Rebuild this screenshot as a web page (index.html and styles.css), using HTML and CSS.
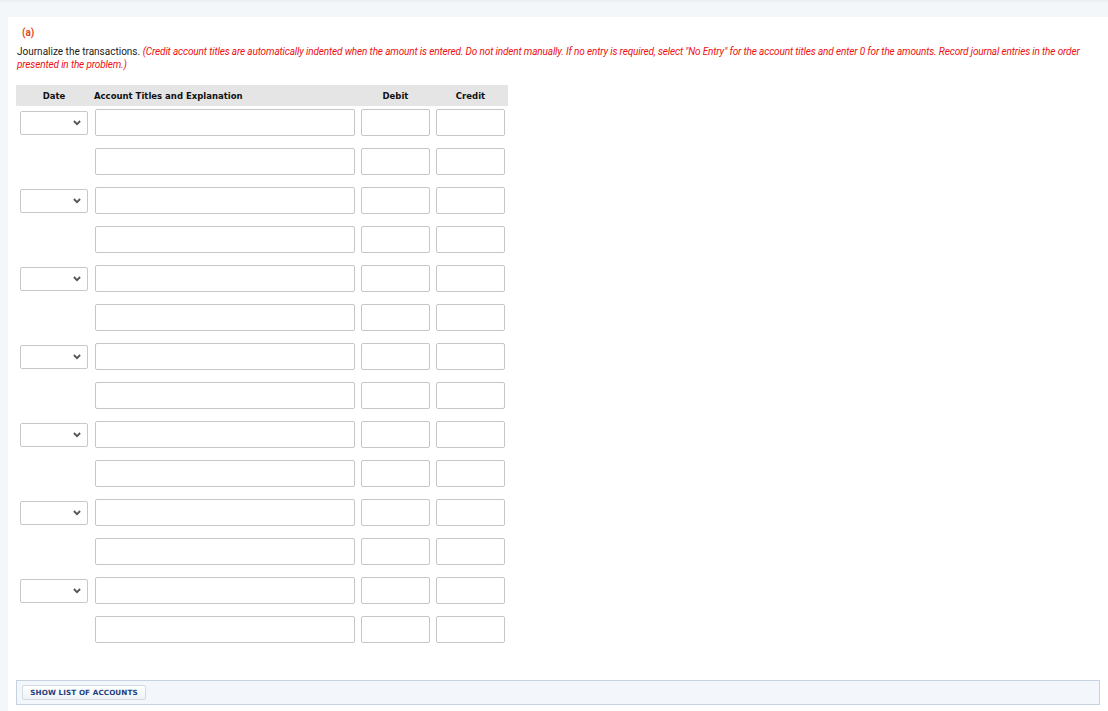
FILE: index.html
```html
<!DOCTYPE html>
<html>
<head>
<meta charset="utf-8">
<link rel="stylesheet" href="styles.css">
</head>
<body>
<div class="panel">
  <div class="part">(a)</div>
  <p class="instr">Journalize the transactions. <em class="note">(Credit account titles are automatically indented when the amount is entered. Do not indent manually. If no entry is required, select "No Entry" for the account titles and enter 0 for the amounts. Record journal entries in the order presented in the problem.)</em></p>
  <div class="journal">
    <div class="head">
      <div class="hc center">Date</div>
      <div class="hc">Account Titles and Explanation</div>
      <div class="hc center">Debit</div>
      <div class="hc center">Credit</div>
    </div>
    <div class="rows" id="rows"></div>
  </div>
  <div class="footer">
    <button class="btn">SHOW LIST OF ACCOUNTS</button>
  </div>
</div>
<template id="tpl-first">
  <div class="row">
    <div class="sel"><svg width="8" height="6" viewBox="0 0 8 6"><path d="M0.9 1 L4 4.2 L7.1 1" fill="none" stroke="#555" stroke-width="1.8"/></svg></div>
    <div class="inp"></div><div class="inp"></div><div class="inp"></div>
  </div>
</template>
<template id="tpl-second">
  <div class="row">
    <div></div>
    <div class="inp"></div><div class="inp"></div><div class="inp"></div>
  </div>
</template>
<script>
  var rows = document.getElementById('rows');
  var a = document.getElementById('tpl-first');
  var b = document.getElementById('tpl-second');
  for (var i = 0; i < 7; i++) {
    rows.appendChild(a.content.cloneNode(true));
    rows.appendChild(b.content.cloneNode(true));
  }
</script>
</body>
</html>
```
FILE: styles.css
```css
html, body {
  margin: 0;
  padding: 0;
}
body {
  background: #f4f7fa;
  border-top: 2px solid #eceef1;
  height: 709px;
  overflow: hidden;
  font-family: Roboto, "Liberation Sans", sans-serif;
}
.panel {
  margin: 15px 0 0 8px;
  background: #ffffff;
  padding: 9px 8px 6px 8px;
  height: 694px;
  box-sizing: border-box;
}
.part {
  color: #e4471c;
  font-weight: bold;
  font-size: 10px;
  line-height: 13px;
  margin-left: 6px;
}
.instr {
  margin: 6px 0 0 1px;
  font-size: 10px;
  line-height: 13px;
  color: #222;
}
.note {
  color: #ee1111;
  letter-spacing: -0.14px;
}
.journal {
  margin-top: 14px;
  width: 492px;
}
.head, .row {
  display: grid;
  grid-template-columns: 68px 261px 69px 69px;
  column-gap: 6px;
  padding-left: 4px;
}
.head {
  background: #e5e5e5;
  height: 21px;
  align-items: center;
  font-family: "DejaVu Sans", Verdana, sans-serif;
  font-weight: bold;
  font-size: 8.5px;
  color: #111;
}
.center {
  text-align: center;
}
.rows {
  display: flex;
  flex-direction: column;
  gap: 12px;
  padding-top: 3px;
}
.row {
  height: 27px;
  align-items: center;
}
.row > :nth-child(2) {
  margin-left: 1px;
}
.inp {
  height: 27px;
  box-sizing: border-box;
  border: 1px solid #c6c6c6;
  border-radius: 2px;
  background: #fff;
}
.sel {
  height: 24px;
  box-sizing: border-box;
  border: 1px solid #c8c8c8;
  border-radius: 2px;
  background: #fff;
  display: flex;
  align-items: center;
  justify-content: flex-end;
  padding-right: 6px;
}
.sel svg {
  display: block;
}
.footer {
  margin-top: 37px;
  height: 25px;
  box-sizing: border-box;
  border: 1px solid #c6d2e0;
  background: #f3f7fb;
  padding: 4px 0 0 5px;
}
.btn {
  display: block;
  height: 15px;
  width: 124px;
  padding: 0;
  border: 1px solid #d3dbe5;
  border-radius: 2px;
  background: linear-gradient(#ffffff, #eef2f7);
  color: #1e3f7d;
  font-family: "DejaVu Sans", Verdana, sans-serif;
  font-weight: bold;
  font-size: 7.2px;
  letter-spacing: 0.1px;
}
```
